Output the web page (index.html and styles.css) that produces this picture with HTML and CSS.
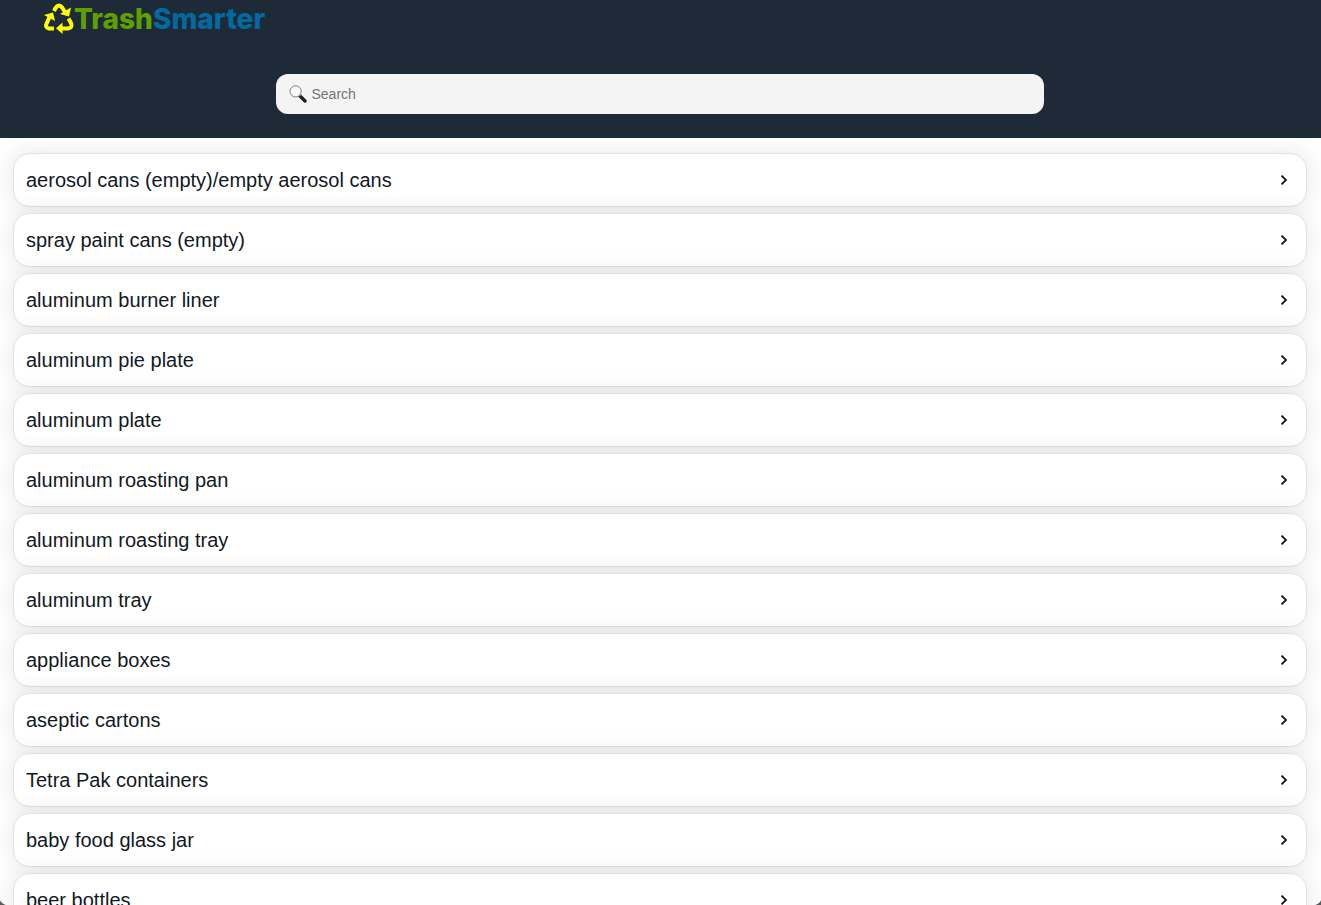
FILE: index.html
```html
<!DOCTYPE html>
<html lang="en">
<head>
    <meta charset="UTF-8">
    <meta name="viewport" content="width=device-width, initial-scale=1.0">
    <title>TrashSmarter</title>
    <link rel="stylesheet" href="styles.css">
</head>
<body>

    <header class="header">
        <h1 class="logo">
            <svg class="logo-icon" viewBox="0 2 30 30" aria-hidden="true">
                <g fill="none" stroke="#ffff00" stroke-width="4">
                    <path d="M10 9 L11.5 6 Q15 1 18.5 6 L21 10"/>
                    <path d="M10 26.5 H5 Q.4 25.5 2.8 21 L6 14"/>
                    <path d="M24.5 16.5 L27 21 Q29 26 24 26.5 H18"/>
                </g>
                <g fill="#ffff00">
                    <path d="M27 5.5 L25 14.5 L16 12 Z"/>
                    <path d="M0 13 L9 10.5 L11 19 Z"/>
                    <path d="M18.5 20.5 V32 L12 26.3 Z"/>
                </g>
            </svg>
            <span class="logo-green">Trash</span><span class="logo-blue">Smarter</span>
        </h1>
        <form class="search">
            <label for="search-box" aria-label="Search">
                <svg class="search-icon" viewBox="0 0 18 18">
                    <path d="M10.5 10.5 L16 16" stroke="#1c2326" stroke-width="3.4" stroke-linecap="round"/>
                    <path d="M9.6 9.1 L11.5 11" stroke="#8c9092" stroke-width="1.5"/>
                    <circle cx="6.6" cy="6.4" r="5.6" fill="#f8fafa" stroke="#777c7e" stroke-width="1"/>
                </svg>
            </label>
            <input type="text" id="search-box" placeholder="Search">
        </form>
    </header>

    <main>
        <ul class="items" id="items"></ul>
    </main>

    <script>
        const items = [
            'aerosol cans (empty)/empty aerosol cans',
            'spray paint cans (empty)',
            'aluminum burner liner',
            'aluminum pie plate',
            'aluminum plate',
            'aluminum roasting pan',
            'aluminum roasting tray',
            'aluminum tray',
            'appliance boxes',
            'aseptic cartons',
            'Tetra Pak containers',
            'baby food glass jar',
            'beer bottles'
        ];

        const arrow = '<svg class="arrow" viewBox="0 0 8 10" aria-hidden="true"><path d="M1.5 .6 L6 5 L1.5 9.4"/></svg>';

        document.getElementById('items').innerHTML = items
            .map(name => `<li><button type="button" class="item"><span>${name}</span>${arrow}</button></li>`)
            .join('');
    </script>

</body>
</html>
```
FILE: styles.css
```css
* {
    margin: 0;
    padding: 0;
    box-sizing: border-box;
}

html {
    scrollbar-width: none;
}

body {
    font-family: 'Liberation Sans', Arial, sans-serif;
    background-color: #ffffff;
    color: #11191f;
}

/* Header */
.header {
    padding: 0 46px 24px 44px;
    background-color: #1e2a37;
}

.logo {
    display: flex;
    align-items: center;
    height: 38px;
    margin-bottom: 36px;
    font-family: Inter, sans-serif;
    font-size: 28px;
    font-weight: 800;
    line-height: 38px;
}

.logo-icon {
    width: 30px;
    height: 30px;
    overflow: visible;
}

.logo-green {
    color: #5da000;
}

.logo-blue {
    color: #0369a1;
}

.search {
    display: flex;
    align-items: center;
    gap: 5px;
    max-width: 768px;
    height: 40px;
    margin: 0 auto;
    padding: 0 13px;
    background-color: #f4f4f4;
    border-radius: 12px;
}

.search-icon {
    display: block;
    width: 18px;
    height: 18px;
}

.search input {
    flex: 1;
    min-width: 0;
    border: none;
    outline: none;
    background: none;
    font-family: inherit;
    font-size: 14px;
}

.search input::placeholder {
    color: #757575;
}

/* List of items */
.items {
    display: flex;
    flex-direction: column;
    gap: 6px;
    padding: 15px 14px 15px 13px;
    list-style: none;
}

.item {
    display: flex;
    align-items: center;
    justify-content: space-between;
    width: 100%;
    height: 54px;
    padding: 0 18px 0 12px;
    border: 1px solid #e0e0e0;
    border-radius: 16px;
    background-color: #ffffff;
    box-shadow: 0 0 24px rgba(0, 0, 0, 0.1);
    color: inherit;
    font-family: inherit;
    font-size: 20px;
    text-align: left;
    cursor: pointer;
}

.arrow {
    width: 8px;
    height: 10px;
    fill: none;
    stroke: #11191f;
    stroke-width: 1.8;
}

/* Rounded corners at the bottom of the window */
body::before,
body::after {
    content: '';
    position: fixed;
    bottom: 0;
    z-index: 1;
    width: 7px;
    height: 5px;
}

body::before {
    left: 0;
    background: radial-gradient(circle at 9px -5px, transparent 10px, #555b5e 11px);
}

body::after {
    right: 0;
    background: radial-gradient(circle at -2px -5px, transparent 10px, #555b5e 11px);
}
```
